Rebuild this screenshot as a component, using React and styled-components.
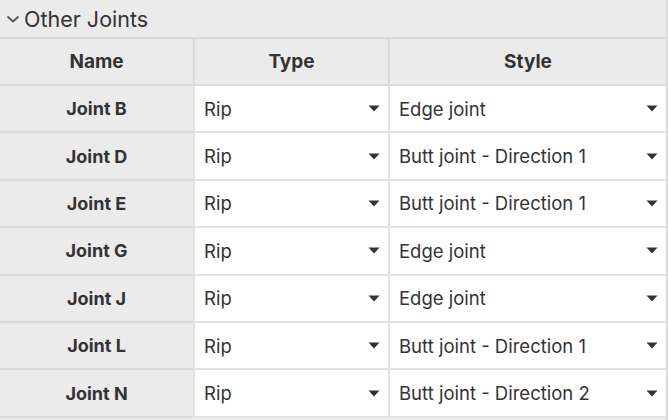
import React from 'react';
import styled, { createGlobalStyle } from 'styled-components';

const GlobalStyle = createGlobalStyle`
  html, body {
    margin: 0;
    padding: 0;
    background: #ebebeb;
    font-family: Inter, "Noto Sans", sans-serif;
    color: #333;
  }
`;

const Panel = styled.div`
  width: 666px;
  height: 420px;
  overflow: hidden;
  background: #ebebeb;
  border-right: 2px solid #dcdcdc;
`;

const SectionHeader = styled.div`
  display: flex;
  align-items: center;
  gap: 4px;
  height: 37px;
  padding-left: 6px;
  font-size: 21.5px;
  color: #333;
  border-bottom: 2px solid #d8d8d8;
`;

const Table = styled.div`
  display: grid;
  grid-template-columns: 193px 195px 1fr;
`;

const HeadCell = styled.div`
  display: flex;
  align-items: center;
  justify-content: center;
  height: 45px;
  font-size: 19px;
  font-weight: 700;
  color: #333;
  background: #ebebeb;
  border-left: ${(p) => (p.first ? 'none' : '2px solid #dadada')};
  border-bottom: 2px solid #dadada;
`;

const NameCell = styled.div`
  display: flex;
  align-items: center;
  justify-content: center;
  height: 45.4px;
  font-size: 18px;
  font-weight: 700;
  color: #333;
  background: #ebebeb;
  border-bottom: 2px solid #dadada;
`;

const SelectCell = styled.div`
  display: flex;
  align-items: center;
  justify-content: space-between;
  height: 45.4px;
  padding: 0 8px 0 9px;
  font-size: 18.5px;
  color: #333;
  background: #fff;
  border-left: 2px solid #e2e2e2;
  border-bottom: 2px solid #e2e2e2;
`;

const Caret = () => (
  <svg width="12" height="7" viewBox="0 0 12 7">
    <path d="M0.5 0.5 L11.5 0.5 L6 6.5 Z" fill="#333" />
  </svg>
);

const Chevron = () => (
  <svg width="14" height="10" viewBox="0 0 14 10">
    <path d="M1.5 2.5 L7 7.5 L12.5 2.5" fill="none" stroke="#555" strokeWidth="1.8" />
  </svg>
);

const rows = [
  ['Joint B', 'Rip', 'Edge joint'],
  ['Joint D', 'Rip', 'Butt joint - Direction 1'],
  ['Joint E', 'Rip', 'Butt joint - Direction 1'],
  ['Joint G', 'Rip', 'Edge joint'],
  ['Joint J', 'Rip', 'Edge joint'],
  ['Joint L', 'Rip', 'Butt joint - Direction 1'],
  ['Joint N', 'Rip', 'Butt joint - Direction 2'],
];

export default function App() {
  return (
    <>
      <GlobalStyle />
      <Panel>
        <SectionHeader>
          <Chevron />
          Other Joints
        </SectionHeader>
        <Table>
          <HeadCell first>Name</HeadCell>
          <HeadCell>Type</HeadCell>
          <HeadCell>Style</HeadCell>
          {rows.map(([name, type, style]) => (
            <React.Fragment key={name}>
              <NameCell>{name}</NameCell>
              <SelectCell>
                {type}
                <Caret />
              </SelectCell>
              <SelectCell>
                {style}
                <Caret />
              </SelectCell>
            </React.Fragment>
          ))}
        </Table>
      </Panel>
    </>
  );
}
